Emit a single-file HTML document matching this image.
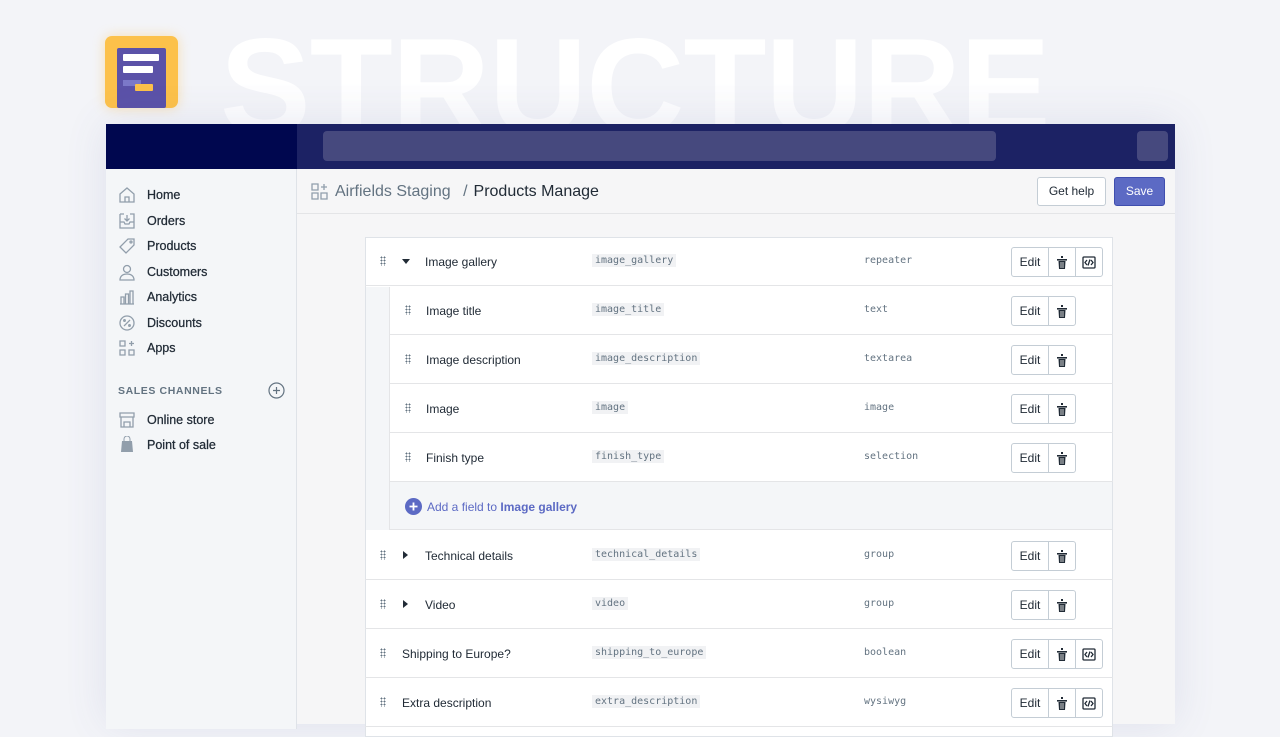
<!DOCTYPE html>
<html><head><style>
*{box-sizing:border-box;margin:0;padding:0}
body{width:1280px;height:720px;overflow:hidden;background:#f3f4f8;font-family:"Liberation Sans",sans-serif;position:relative;color:#212b36}
.big{position:absolute;left:220px;top:8px;font-size:136px;font-weight:900;letter-spacing:-1px;color:#fff;-webkit-mask-image:linear-gradient(#000 40%,rgba(0,0,0,.5));mask-image:linear-gradient(#000 40%,rgba(0,0,0,.5))}
.logo{position:absolute;left:105px;top:36px;width:73px;height:72px;background:#fcc14a;border-radius:7px;box-shadow:0 0 12px rgba(252,193,74,.4)}
.logo .in{position:absolute;left:12px;top:12px;width:49px;height:60px;background:#5b52a8;border-radius:2px}
.win{position:absolute;left:106px;top:124px;width:1069px;height:600px;background:#f6f6f7;box-shadow:0 0 40px rgba(80,90,160,.12)}
.top{height:45px;background:#1c2264;position:relative}
.top .l{position:absolute;left:0;top:0;width:191px;height:45px;background:#00074f}
.search{position:absolute;left:217px;top:7px;width:673px;height:30px;background:#46497e;border-radius:4px}
.tb{position:absolute;left:1031px;top:7px;width:31px;height:30px;background:#46497e;border-radius:4px}
.side{position:absolute;left:0;top:45px;width:191px;height:560px;background:#f4f6f8;border-right:1px solid #dfe3e8}
.nav{position:absolute;left:12px;font-size:12.5px;color:#212b36;display:flex;align-items:center;-webkit-text-stroke:.25px #212b36}
.nav svg{width:18px;height:18px;margin-right:11px}
.hdr{position:absolute;left:191px;top:45px;right:0;height:45px;border-bottom:1px solid #e4e5e7}
.card{position:absolute;left:259px;top:113px;width:748px;height:500px;background:#fff;border:1px solid #dfe3e8}
.row{position:absolute;left:0;right:0;height:49px;border-bottom:1px solid #e4e5e7;font-size:12px}
.row .t{position:absolute;top:18px}
.code{position:absolute;top:17px;font-family:"DejaVu Sans Mono",monospace;font-size:10px;background:#f1f2f4;color:#637381;padding:1px 3px}
.ty{position:absolute;top:18px;font-family:"DejaVu Sans Mono",monospace;font-size:10px;color:#637381}
.btns{position:absolute;top:10px;height:30px;display:flex;border:1px solid #c4cdd5;border-radius:3px;background:#fff}
.btns div{height:28px;display:flex;align-items:center;justify-content:center;border-left:1px solid #c4cdd5;font-size:12px}
.btns div:first-child{border-left:none;width:36px}
.btns div.i{width:27px}
.drag{position:absolute;top:19px;width:6px;height:10px;background-image:radial-gradient(circle,#637381 0.8px,transparent 1px);background-size:3px 3px}
.car{position:absolute;top:21px;width:0;height:0}
</style></head><body>
<div class="big">STRUCTURE</div>
<div class="logo"><div class="in">
<div style="position:absolute;left:6px;top:6px;width:36px;height:7px;background:#fff;border-radius:1px"></div>
<div style="position:absolute;left:6px;top:18px;width:30px;height:7px;background:#fff;border-radius:1px"></div>
<div style="position:absolute;left:6px;top:32px;width:18px;height:6px;background:#7b78c8"></div>
<div style="position:absolute;left:18px;top:36px;width:18px;height:7px;background:#fcc14a;border-radius:1px"></div>
</div></div>
<div class="win">
<div class="top"><div class="l"></div><div class="search"></div><div class="tb"></div></div>
<div class="side">
<div class="nav" style="top:17px"><svg viewBox="0 0 18 18" fill="none" stroke="#919eab" stroke-width="1.3"><path d="M2 8L9 2l7 6v8H2z M7 16v-5h4v5"/></svg>Home</div>
<div class="nav" style="top:43px"><svg viewBox="0 0 18 18" fill="none" stroke="#919eab" stroke-width="1.3"><path d="M2 2h4M12 2h4v14H2V2M2 10h4l1 2h4l1-2h4M9 3v6M6.5 6.5L9 9l2.5-2.5"/></svg>Orders</div>
<div class="nav" style="top:68px"><svg viewBox="0 0 18 18" fill="none" stroke="#919eab" stroke-width="1.3"><path d="M10 2h6v6l-8 8-6-6z"/><circle cx="13" cy="5" r="1"/></svg>Products</div>
<div class="nav" style="top:94px"><svg viewBox="0 0 18 18" fill="none" stroke="#919eab" stroke-width="1.3"><circle cx="9" cy="6" r="3.5"/><path d="M2 17c0-4 3-6 7-6s7 2 7 6z"/></svg>Customers</div>
<div class="nav" style="top:119px"><svg viewBox="0 0 18 18" fill="none" stroke="#919eab" stroke-width="1.3"><path d="M2 16h14M3 16V9h3v7M7.5 16V6h3v10M12 16V3h3v13"/></svg>Analytics</div>
<div class="nav" style="top:145px"><svg viewBox="0 0 18 18" fill="none" stroke="#919eab" stroke-width="1.3"><circle cx="9" cy="9" r="7"/><path d="M6 12l6-6"/><circle cx="6.5" cy="6.5" r=".8"/><circle cx="11.5" cy="11.5" r=".8"/></svg>Discounts</div>
<div class="nav" style="top:170px"><svg viewBox="0 0 18 18" fill="none" stroke="#919eab" stroke-width="1.3"><path d="M2 2h5v5H2zM2 11h5v5H2zM11 11h5v5h-5zM13.5 2v5M11 4.5h5"/></svg>Apps</div>
<div style="position:absolute;left:12px;top:216px;font-size:10.5px;font-weight:bold;color:#637381;letter-spacing:.6px">SALES CHANNELS</div>
<svg style="position:absolute;left:162px;top:213px" width="17" height="17" viewBox="0 0 17 17" fill="none" stroke="#637381" stroke-width="1.2"><circle cx="8.5" cy="8.5" r="7.5"/><path d="M8.5 5v7M5 8.5h7"/></svg>
<div class="nav" style="top:242px"><svg viewBox="0 0 18 18" fill="none" stroke="#919eab" stroke-width="1.3"><path d="M2 2h14v4H2zM3 6v10h12V6M6 16v-5h6v5"/></svg>Online store</div>
<div class="nav" style="top:267px"><svg viewBox="0 0 18 18" fill="#919eab"><path d="M4 5h10l1 11H3z"/><path d="M6 5V3a3 3 0 016 0v2" fill="none" stroke="#919eab"/></svg>Point of sale</div>
</div>
<div class="hdr">
<svg style="position:absolute;left:14px;top:14px" width="17" height="17" viewBox="0 0 17 17" fill="none" stroke="#919eab" stroke-width="1.3"><path d="M1 1h6v6H1zM1 10h6v6H1zM10 10h6v6h-6zM13 1v6M10 4h6"/></svg>
<div style="position:absolute;left:38px;top:14px;font-size:16px;color:#637381">Airfields Staging <span style="margin:0 6px 0 8px">/</span><span style="color:#212b36">Products Manage</span></div>
<div style="position:absolute;left:740px;top:8px;width:69px;height:29px;border:1px solid #c4cdd5;border-radius:3px;background:#fff;font-size:12px;text-align:center;line-height:27px">Get help</div>
<div style="position:absolute;left:817px;top:8px;width:51px;height:29px;border:1px solid #3f4eae;border-radius:3px;background:#5c6ac4;color:#fff;font-size:12px;text-align:center;line-height:27px">Save</div>
</div>
<div class="card">
<div style="position:absolute;left:0;top:49px;width:24px;height:243px;background:#f4f6f8;border-right:1px solid #e4e5e7"></div>
<div style="position:absolute;left:24px;top:243px;right:0;height:49px;background:#f4f6f8;border-bottom:1px solid #e4e5e7"></div>
<svg style="position:absolute;left:39px;top:260px" width="17" height="17" viewBox="0 0 17 17"><circle cx="8.5" cy="8.5" r="8.5" fill="#5c6ac4"/><path d="M8.5 4.5v8M4.5 8.5h8" stroke="#fff" stroke-width="1.8"/></svg>
<div style="position:absolute;left:61px;top:262px;font-size:12px;color:#5c6ac4">Add a field to <b>Image gallery</b></div>
</div>
<div id="rows"></div>
</div>
<script>
var R=[[0,1,"Image gallery","image_gallery","repeater",3],[24,0,"Image title","image_title","text",2],[24,0,"Image description","image_description","textarea",2],[24,0,"Image","image","image",2],[24,0,"Finish type","finish_type","selection",2],null,[0,2,"Technical details","technical_details","group",2],[0,2,"Video","video","group",2],[0,0,"Shipping to Europe?","shipping_to_europe","boolean",3],[0,0,"Extra description","extra_description","wysiwyg",3]];
var trash='<svg width="12" height="13" viewBox="0 0 12 13" fill="#212b36"><rect x="1" y="3" width="10" height="1.6"/><rect x="5" y="0" width="2" height="2"/><path d="M2.5 5h7l-.5 8h-6z"/><path d="M5 6v6M7 6v6" stroke="#fff" stroke-width=".8"/></svg>';
var code='<svg width="14" height="13" viewBox="0 0 14 13" fill="none" stroke="#212b36" stroke-width="1.3"><rect x="1" y="1" width="12" height="11" rx="1"/><path d="M5 4L3 6.5 5 9M9 4l2 2.5L9 9M8 3.5l-2 6"/></svg>';
var h='';R.forEach(function(r,i){if(!r)return;var x=365-106+r[0],w=748-r[0],y=113+i*49;
h+='<div class="row" style="left:'+x+'px;width:'+w+'px;top:'+y+'px;right:auto">';
h+='<div class="drag" style="left:'+(r[0]?16:15)+'px"></div>';
if(r[1]==1)h+='<div class="car" style="left:37px;top:22px;border-left:4px solid transparent;border-right:4px solid transparent;border-top:5px solid #212b36"></div>';
if(r[1]==2)h+='<div class="car" style="left:38px;top:20px;border-top:4px solid transparent;border-bottom:4px solid transparent;border-left:5px solid #212b36"></div>';
h+='<div class="t" style="left:'+(r[0]?37:(r[1]?60:37))+'px">'+r[2]+'</div>';
h+='<div class="code" style="left:'+(227-r[0])+'px">'+r[3]+'</div>';
h+='<div class="ty" style="left:'+(499-r[0])+'px">'+r[4]+'</div>';
h+='<div class="btns" style="left:'+(646-r[0])+'px"><div>Edit</div><div class="i">'+trash+'</div>'+(r[5]==3?'<div class="i">'+code+'</div>':'')+'</div></div>';});
document.getElementById('rows').innerHTML=h;
</script>
</body></html>
